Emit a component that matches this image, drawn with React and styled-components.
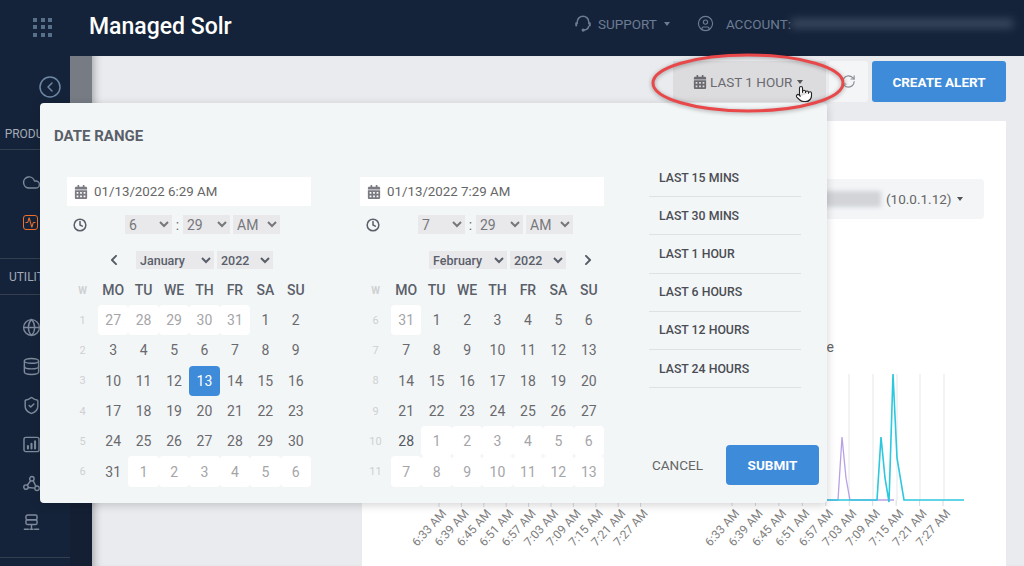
import React from 'react';
import styled, { createGlobalStyle } from 'styled-components';
import {
  Activity,
  CircleChevronLeft,
  CircleUser,
  Clock,
  Cloud,
  Database,
  Globe,
  Pointer,
  RefreshCw,
  ShieldCheck,
} from 'lucide-react';
import { FaCalendarAlt, FaChevronLeft, FaChevronRight } from 'react-icons/fa';

const range = (from, to) => {
  const list = [];
  for (let i = from; i <= to; i += 1) list.push(i);
  return list;
};

const DAY_NAMES = ['MO', 'TU', 'WE', 'TH', 'FR', 'SA', 'SU'];
const TICK_LABELS = ['6:33 AM', '6:39 AM', '6:45 AM', '6:51 AM', '6:57 AM', '7:03 AM', '7:09 AM', '7:15 AM', '7:21 AM', '7:27 AM'];
const PRESETS = ['LAST 15 MINS', 'LAST 30 MINS', 'LAST 1 HOUR', 'LAST 6 HOURS', 'LAST 12 HOURS', 'LAST 24 HOURS'];
const RAIL_ICON = 19;

const january = {
  input: '01/13/2022 6:29 AM',
  hour: '6',
  month: 'January',
  firstWeek: 1,
  selected: 13,
  days: [
    ...[27, 28, 29, 30, 31].map((d) => ({ d, off: true })),
    ...range(1, 31).map((d) => ({ d })),
    ...range(1, 6).map((d) => ({ d, off: true })),
  ],
};

const february = {
  input: '01/13/2022 7:29 AM',
  hour: '7',
  month: 'February',
  firstWeek: 6,
  days: [
    { d: 31, off: true },
    ...range(1, 28).map((d) => ({ d, strong: d === 28 })),
    ...range(1, 13).map((d) => ({ d, off: true })),
  ],
};

const BoxedBars = () => (
  <svg width={RAIL_ICON} height={RAIL_ICON} viewBox="0 0 24 24" fill="none" stroke="currentColor" strokeWidth="1.8" strokeLinecap="round">
    <rect x="2.5" y="3" width="19" height="18" rx="2.5" />
    <path d="M7.5 17v-3M12 17v-6M16.5 17V8" strokeWidth="2.6" />
  </svg>
);

const NetworkNodes = () => (
  <svg width={RAIL_ICON} height={RAIL_ICON} viewBox="0 0 24 24" fill="none" stroke="currentColor" strokeWidth="1.8">
    <circle cx="12.5" cy="6" r="2.8" />
    <circle cx="5" cy="16.5" r="2.8" />
    <circle cx="19" cy="18" r="2.8" />
    <path d="M11 8.4 6.6 14.2M14 8.4l3.6 7.2M7.8 17l8.4.8" />
  </svg>
);

const ServerStack = () => (
  <svg width={RAIL_ICON} height={RAIL_ICON} viewBox="0 0 24 24" fill="none" stroke="currentColor" strokeWidth="1.8" strokeLinecap="round">
    <rect x="5" y="2.5" width="14" height="6" rx="2" />
    <rect x="5" y="8.5" width="14" height="6" rx="2" />
    <path d="M12 15v4M3 20.5h5M10 20.5h4M16 20.5h5" />
  </svg>
);

const HeadsetIcon = () => (
  <svg width="16" height="17" viewBox="0 0 16 17" fill="none" stroke="currentColor" strokeWidth="1.5" strokeLinecap="round">
    <path d="M2.2 8.4V7a5.8 5.8 0 0 1 11.6 0v1.4" />
    <path d="M1.2 8.2v2.4M14.8 8.2v2.4" strokeWidth="2" />
    <path d="M13.6 11.4c-.3 2.2-1.7 3.4-4.4 3.6" />
    <circle cx="8.2" cy="15.1" r=".9" fill="currentColor" />
  </svg>
);

const Calendar = ({ data }) => {
  const weeks = Math.ceil(data.days.length / 7);
  return (
    <CalendarColumn>
      <DateInput>
        <FaCalendarAlt size={14} />
        {data.input}
      </DateInput>
      <TimeRow>
        <Clock size={14} strokeWidth={2.6} />
        <TimeSelects>
          <TimeSelect defaultValue={data.hour}>
            <option>{data.hour}</option>
          </TimeSelect>
          <Colon>:</Colon>
          <TimeSelect defaultValue="29">
            <option>29</option>
          </TimeSelect>
          <TimeSelect $ampm defaultValue="AM">
            <option>AM</option>
          </TimeSelect>
        </TimeSelects>
      </TimeRow>
      <NavRow>
        <PrevSlot>{data.month === 'January' && <FaChevronLeft size={12} />}</PrevSlot>
        <MonthSelect defaultValue={data.month}>
          <option>{data.month}</option>
        </MonthSelect>
        <YearSelect defaultValue="2022">
          <option>2022</option>
        </YearSelect>
        <NextSlot>{data.month === 'February' && <FaChevronRight size={12} />}</NextSlot>
      </NavRow>
      <DayGrid>
        <WeekHead>W</WeekHead>
        {DAY_NAMES.map((name) => (
          <DayHead key={name}>{name}</DayHead>
        ))}
        {range(0, weeks - 1).map((w) => (
          <React.Fragment key={w}>
            <WeekNumber>{data.firstWeek + w}</WeekNumber>
            {data.days.slice(w * 7, w * 7 + 7).map((day, i) => (
              <Day
                key={i}
                $off={day.off}
                $strong={day.strong}
                $selected={!day.off && day.d === data.selected}
              >
                {day.d}
              </Day>
            ))}
          </React.Fragment>
        ))}
      </DayGrid>
    </CalendarColumn>
  );
};

const LeftChart = () => (
  <g>
    {TICK_LABELS.map((label, i) => {
      const x = 77 + i * 22.4;
      return (
        <g key={label}>
          <line x1={x} x2={x} y1="137" y2="141" stroke="#d8dadd" />
          <text x={x + 8} y="148" transform={`rotate(-48 ${x + 8} 148)`} textAnchor="end" fontSize="12" fill="#808080">
            {label}
          </text>
        </g>
      );
    })}
  </g>
);

const RightChart = () => (
  <g>
    {[487, 511, 535, 558, 582].map((x) => (
      <line key={x} x1={x} x2={x} y1="8" y2="134" stroke="#e6e7ea" />
    ))}
    {TICK_LABELS.map((label, i) => {
      const x = 370 + i * 23.45;
      return (
        <g key={label}>
          <line x1={x} x2={x} y1="134" y2="140" stroke="#d8dadd" />
          <text x={x + 8} y="148" transform={`rotate(-48 ${x + 8} 148)`} textAnchor="end" fontSize="12" fill="#808080">
            {label}
          </text>
        </g>
      );
    })}
    <polyline points="465,134 476,134 480,71 484,112 488,134 532,134" fill="none" stroke="#b9a0e6" strokeWidth="1.3" />
    <polyline points="465,134 515,134 519,71 523,112 527,136 531,8 535,92 542,134 602,134" fill="none" stroke="#2cc8de" strokeWidth="1.6" />
  </g>
);

const App = () => (
  <Page>
    <GlobalStyle />
    <Header>
      <Brand>
        <GridMark>
          {range(1, 9).map((n) => (
            <GridDot key={n} />
          ))}
        </GridMark>
        <BrandTitle>Managed Solr</BrandTitle>
      </Brand>
      <HeaderMenu>
        <HeaderItem>
          <HeadsetIcon />
          SUPPORT
          <Caret />
        </HeaderItem>
        <AccountItem>
          <CircleUser size={17} strokeWidth={1.6} />
          <AccountLabel>ACCOUNT:</AccountLabel>
          <BlurredAccount />
        </AccountItem>
      </HeaderMenu>
    </Header>
    <Body>
      <Sidebar>
        <Rail>
          <BackRow>
            <CircleChevronLeft size={24} strokeWidth={1.5} />
          </BackRow>
          <SectionLabel>PRODUCTS</SectionLabel>
          <IconGroup $gap={21}>
            <Cloud size={RAIL_ICON} strokeWidth={1.8} />
            <ActiveIcon>
              <Activity size={11} strokeWidth={2.2} />
            </ActiveIcon>
          </IconGroup>
          <SectionLabel $top>UTILITIES</SectionLabel>
          <IconGroup $gap={20} $last>
            <Globe size={RAIL_ICON} strokeWidth={1.7} />
            <Database size={RAIL_ICON} strokeWidth={1.8} />
            <ShieldCheck size={RAIL_ICON} strokeWidth={1.8} />
            <BoxedBars />
            <NetworkNodes />
            <ServerStack />
          </IconGroup>
        </Rail>
        <RailEdge />
      </Sidebar>
      <Main>
        <Toolbar>
          <RangeButton>
            <FaCalendarAlt size={14} />
            LAST 1 HOUR
            <Caret $dark />
          </RangeButton>
          <RefreshButton>
            <RefreshCw size={15} strokeWidth={1.8} />
          </RefreshButton>
          <CreateButton>CREATE ALERT</CreateButton>
        </Toolbar>
        <Card>
          <NodePicker>
            <BlurredNode />
            (10.0.1.12)
            <Caret $dark />
          </NodePicker>
          <ChartTitle>Average response time</ChartTitle>
          <ChartSvg viewBox="0 0 644 200">
            <LeftChart />
            <RightChart />
          </ChartSvg>
        </Card>
      </Main>
    </Body>

    <Popover>
      <PopoverTitle>DATE RANGE</PopoverTitle>
      <PopoverBody>
        <Calendar data={january} />
        <Calendar data={february} />
        <SideColumn>
          <PresetList>
            {PRESETS.map((preset) => (
              <Preset key={preset}>{preset}</Preset>
            ))}
          </PresetList>
          <Footer>
            <CancelButton>CANCEL</CancelButton>
            <SubmitButton>SUBMIT</SubmitButton>
          </Footer>
        </SideColumn>
      </PopoverBody>
    </Popover>

    <Annotation width="210" height="72" viewBox="0 0 210 72">
      <ellipse cx="105" cy="36" rx="95" ry="28" fill="none" stroke="#e8484a" strokeWidth="3" />
    </Annotation>
    <HandCursor>
      <Pointer size={18} fill="#fff" color="#222" strokeWidth={1.5} />
    </HandCursor>
  </Page>
);

export default App;

// Styled components

const GlobalStyle = createGlobalStyle`
  html, body {
    margin: 0;
    padding: 0;
    background: #e9ebee;
  }
  * {
    box-sizing: border-box;
  }
  body {
    font-family: Roboto, "Liberation Sans", sans-serif;
  }
`;

const Page = styled.div`
  position: relative;
  display: flex;
  flex-direction: column;
  width: 1024px;
  height: 566px;
  overflow: hidden;
`;

const Header = styled.header`
  display: flex;
  align-items: center;
  justify-content: space-between;
  flex: 0 0 56px;
  background-color: #15233a;
`;

const Brand = styled.div`
  display: flex;
  align-items: center;
  padding-left: 33px;
`;

const GridMark = styled.div`
  display: grid;
  grid-template-columns: repeat(3, 4px);
  grid-auto-rows: 4px;
  gap: 3.5px;
  margin: 0 37px 2px 0;
`;

const GridDot = styled.span`
  background-color: #56708a;
`;

const BrandTitle = styled.h1`
  margin: 0 0 4px;
  font-size: 23px;
  font-weight: 500;
  color: #fff;
`;

const HeaderMenu = styled.nav`
  display: flex;
  align-items: center;
  margin-bottom: 9px;
`;

const HeaderItem = styled.div`
  display: flex;
  align-items: center;
  gap: 7px;
  font-size: 13.5px;
  color: #6c7c92;
`;

const AccountItem = styled(HeaderItem)`
  margin-left: 27px;
  gap: 0;
`;

const AccountLabel = styled.span`
  margin-left: 12px;
`;

const BlurredAccount = styled.div`
  width: 222px;
  height: 9px;
  margin-right: 11px;
  background-color: #3c4a60;
  filter: blur(4px);
`;

const Caret = styled.span`
  width: 0;
  height: 0;
  border-left: 3.5px solid transparent;
  border-right: 3.5px solid transparent;
  border-top: 4px solid ${(props) => (props.$dark ? '#555' : '#6c7c92')};
`;

const Body = styled.div`
  display: flex;
  flex: 1;
  min-height: 0;
`;

const Sidebar = styled.aside`
  display: flex;
  flex: 0 0 92px;
  background-color: #15233a;
`;

const Rail = styled.div`
  display: flex;
  flex-direction: column;
  width: 70px;
  color: #7f8b9c;
`;

const RailEdge = styled.div`
  flex: 1;
  background: linear-gradient(#777b84 0 47px, #151f33 47px);
`;

const BackRow = styled.div`
  display: flex;
  align-items: center;
  justify-content: flex-end;
  height: 62px;
  padding-right: 8px;
  color: #6d88a3;
`;

const SectionLabel = styled.div`
  display: flex;
  align-items: center;
  justify-content: center;
  height: ${(props) => (props.$top ? '37px' : '32px')};
  font-size: 12px;
  color: #a3abb7;
  border-bottom: 1px solid #34404f;
  border-top: ${(props) => (props.$top ? '1px solid #34404f' : 'none')};
`;

const IconGroup = styled.div`
  display: flex;
  flex-direction: column;
  align-items: flex-start;
  gap: ${(props) => props.$gap}px;
  padding: 23px 0 25px 22px;
  border-bottom: 1px solid transparent;
  ${(props) => props.$last && 'border-bottom-color: #34404f;'}
`;

const ActiveIcon = styled.span`
  display: flex;
  align-items: center;
  justify-content: center;
  width: 15px;
  height: 15px;
  margin: 2px 0 2px 1px;
  border: 1.5px solid #f0702a;
  border-radius: 3px;
  color: #f0702a;
`;

const Main = styled.main`
  display: flex;
  flex-direction: column;
  flex: 1;
  background-color: #e9ebee;
  box-shadow: inset 9px 0 8px -7px rgba(0, 0, 0, 0.3);
`;

const Toolbar = styled.div`
  display: flex;
  justify-content: flex-end;
  flex: 0 0 65px;
  padding: 5px 18px 0 0;
`;

const RangeButton = styled.div`
  display: flex;
  align-items: center;
  justify-content: flex-start;
  gap: 3px;
  width: 153px;
  height: 41px;
  padding-left: 20px;
  font-size: 13.5px;
  color: #6a6a70;
  background-color: #dcdcde;

  span {
    margin-left: 2px;
  }
`;

const RefreshButton = styled.div`
  display: flex;
  align-items: center;
  justify-content: center;
  width: 39px;
  height: 41px;
  margin-left: 3px;
  color: #888d94;
  background-color: #f3f5f7;
  border-radius: 3px;
`;

const CreateButton = styled.div`
  display: flex;
  align-items: center;
  justify-content: center;
  width: 134px;
  height: 41px;
  margin-left: 4px;
  font-size: 13.5px;
  font-weight: 700;
  color: #fff;
  background-color: #3d8bd9;
  border-radius: 3px;
`;

const Card = styled.section`
  display: flex;
  flex-direction: column;
  flex: 1;
  margin: 0 18px 0 270px;
  background-color: #fff;
`;

const NodePicker = styled.div`
  display: flex;
  align-items: center;
  align-self: flex-end;
  gap: 5px;
  width: 184px;
  height: 40px;
  margin: 58px 22px 0 0;
  padding-left: 22px;
  font-size: 13.5px;
  color: #666;
  background-color: #f3f5f7;
  border-radius: 4px;
`;

const BlurredNode = styled.div`
  width: 59px;
  height: 16px;
  background-color: #d2d4d7;
  filter: blur(2px);
`;

const ChartTitle = styled.div`
  width: 472px;
  margin-top: 120px;
  font-size: 14px;
  line-height: 16px;
  text-align: right;
  color: #666;
`;

const ChartSvg = styled.svg`
  display: block;
  width: 644px;
  height: 200px;
  margin-top: 11px;
  font-family: Roboto, "Liberation Sans", sans-serif;
`;

const Popover = styled.div`
  position: absolute;
  left: 40px;
  top: 103px;
  width: 787px;
  height: 400px;
  background-color: #f3f6f7;
  border-radius: 4px;
  box-shadow: 0 2px 10px rgba(0, 0, 0, 0.18);
`;

const PopoverTitle = styled.h2`
  height: 55px;
  margin: 0;
  padding: 25px 0 0 14px;
  font-size: 15px;
  line-height: 16px;
  font-weight: 700;
  color: #5a5f6a;
`;

const PopoverBody = styled.div`
  display: flex;
  padding-left: 27px;
`;

const CalendarColumn = styled.div`
  width: 244px;
  margin-right: 49px;
  padding-top: 19px;
`;

const DateInput = styled.div`
  display: flex;
  align-items: center;
  gap: 6px;
  height: 29px;
  padding-left: 7px;
  font-size: 13.3px;
  color: #666;
  background-color: #fff;

  svg {
    color: #7a7a82;
  }
`;

const TimeRow = styled.div`
  display: flex;
  align-items: center;
  height: 19px;
  margin-top: 9px;
  padding-left: 6px;
  color: #5a5f6a;
`;

const TimeSelects = styled.div`
  display: flex;
  align-items: center;
  margin-left: 38px;
`;

const NativeSelect = styled.select`
  height: 100%;
  padding: 0;
  border: none;
  border-radius: 0;
  outline: none;
  font-family: Roboto, "Liberation Sans", sans-serif;
  color: #666;
  background-color: #e9e9ec;
`;

const TimeSelect = styled(NativeSelect)`
  width: 47px;
  height: 19px;
  margin-left: ${(props) => (props.$ampm ? '3px' : '0')};
  font-size: 14px;
  color: #77777b;
`;

const Colon = styled.span`
  width: 11px;
  font-size: 14px;
  text-align: center;
  color: #666;
`;

const NavRow = styled.div`
  display: flex;
  align-items: center;
  height: 18px;
  margin-top: 17px;
  color: #555b66;
`;

const PrevSlot = styled.div`
  display: flex;
  justify-content: flex-end;
  width: 69px;
  padding-right: 16px;
`;

const NextSlot = styled.div`
  display: flex;
  padding-left: 16px;
`;

const MonthSelect = styled(NativeSelect)`
  width: 78px;
  margin-right: 3px;
  font-size: 12.5px;
  font-weight: 500;
  color: #5a5f6a;
`;

const YearSelect = styled(MonthSelect)`
  width: 56px;
  margin-right: 0;
`;

const DayGrid = styled.div`
  display: grid;
  grid-template-columns: 31px repeat(7, 1fr);
  grid-template-rows: 30px;
  grid-auto-rows: 30.3px;
  margin-top: 6px;
`;

const GridCell = styled.div`
  display: flex;
  align-items: center;
  justify-content: center;
`;

const WeekHead = styled(GridCell)`
  font-size: 10px;
  font-weight: 700;
  color: #cfd0d2;
`;

const DayHead = styled(GridCell)`
  font-size: 14px;
  font-weight: 500;
  color: #5a5f6a;
`;

const WeekNumber = styled(GridCell)`
  font-size: 11px;
  color: #cfd0d2;
`;

const dayColor = (props) => {
  if (props.$selected) return '#fff';
  if (props.$off) return '#a5a5a8';
  if (props.$strong) return '#55585f';
  return '#6a6a6e';
};

const Day = styled(GridCell)`
  font-size: 14px;
  color: ${dayColor};
  background-color: ${(props) => {
    if (props.$selected) return '#3d8bd9';
    return props.$off ? '#fff' : 'transparent';
  }};
  border-radius: 4px;
`;

const SideColumn = styled.div`
  display: flex;
  flex-direction: column;
  width: 170px;
  margin-left: -4px;
  height: 327px;
  padding-top: 1px;
`;

const PresetList = styled.div`
  width: 152px;
`;

const Preset = styled.div`
  display: flex;
  align-items: center;
  height: 38.2px;
  padding-left: 10px;
  font-size: 12.3px;
  font-weight: 500;
  color: #4a4d53;
  border-bottom: 1px solid #dfe2e4;
`;

const Footer = styled.div`
  display: flex;
  align-items: center;
  justify-content: space-between;
  margin-top: auto;
  padding-left: 3px;
`;

const CancelButton = styled.div`
  font-size: 13.5px;
  color: #666;
`;

const SubmitButton = styled.div`
  display: flex;
  align-items: center;
  justify-content: center;
  width: 93px;
  height: 40px;
  font-size: 13.5px;
  font-weight: 700;
  color: #fff;
  background-color: #3d8bd9;
  border-radius: 4px;
`;

const Annotation = styled.svg`
  position: absolute;
  left: 643px;
  top: 47px;
  filter: drop-shadow(0 1px 2px rgba(0, 0, 0, 0.35));
`;

const HandCursor = styled.div`
  position: absolute;
  left: 795px;
  top: 85px;
  line-height: 0;
`;
